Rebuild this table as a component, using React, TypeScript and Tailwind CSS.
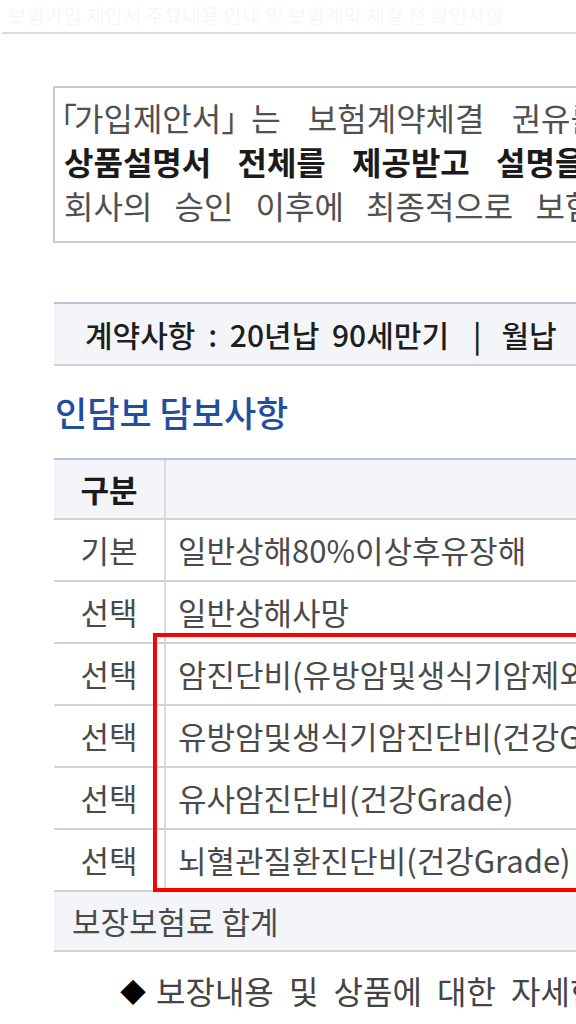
const font = { fontFamily: '"Noto Sans CJK KR", "Noto Sans", sans-serif' };

const rows = [
  { kind: "기본", name: "일반상해80%이상후유장해" },
  { kind: "선택", name: "일반상해사망" },
  { kind: "선택", name: "암진단비(유방암및생식기암제외)(건강Grade)" },
  { kind: "선택", name: "유방암및생식기암진단비(건강Grade)" },
  { kind: "선택", name: "유사암진단비(건강Grade)" },
  { kind: "선택", name: "뇌혈관질환진단비(건강Grade)" },
];

export default function App() {
  return (
    <div className="w-[576px] h-[1024px] overflow-hidden bg-white" style={font}>
      {/* faded top line */}
      <div className="h-[32px] w-[720px] pl-[8px] text-[20px] leading-[32px] text-[#f7f7f9] whitespace-nowrap">
        보험가입 제안서 주요내용 안내 및 보험계약 체결 전 확인사항
      </div>
      <div className="ml-[2px] h-[2px] w-[720px] bg-[#dcdce6]" />

      {/* notice box */}
      <div className="ml-[53px] mt-[52px] w-[820px] border-2 border-r-0 border-[#cacaca] pl-[9px] pt-[7px] pb-[14px] text-[32px] leading-[44px] whitespace-nowrap">
        <div className="text-[#505050] [word-spacing:20px]">
          <span className="inline-block -ml-[19px] -mr-[3px]">「</span>가입제안서<span className="inline-block -mr-[2px]">」</span>는 보험계약체결 권유를 위한 자료이며
        </div>
        <div className="font-bold text-[#1b1b1b] [word-spacing:19px]">상품설명서 전체를 제공받고 설명을 들으신 후</div>
        <div className="text-[#505050] [word-spacing:15px]">회사의 승인 이후에 최종적으로 보험계약이 성립됩니다.</div>
      </div>

      {/* contract bar */}
      <div className="ml-[54px] mt-[59px] w-[820px] h-[64px] border-t-2 border-b-2 border-t-[#b9c3d7] border-b-[#d2d2d2] bg-[#f4f5f9] pl-[31px] flex items-center text-[30px] font-medium text-[#1e1e1e] whitespace-nowrap">
        <span className="[word-spacing:6px]">계약사항 : 20년납 90세만기</span>
        <span className="ml-[24px] mr-[20px]">|</span>
        <span>월납</span>
        <span className="ml-[24px] mr-[20px]">|</span>
        <span>전기납</span>
      </div>

      {/* heading */}
      <div className="ml-[55px] mt-[24px] h-[44px] flex items-center text-[35px] font-medium text-[#1f4f9f] whitespace-nowrap">
        인담보 담보사항
      </div>

      {/* table */}
      <div className="relative ml-[54px] mt-[24px] w-[820px] text-[31px] whitespace-nowrap">
        <div className="flex h-[60px] border-t-2 border-[#b9c3d7] bg-[#f4f5f9]">
          <div className="w-[112px] border-r-2 border-[#d8dbe3] flex items-center justify-center font-bold text-[#1b1b1b]">
            구분
          </div>
          <div className="flex-1" />
        </div>
        {rows.map((r, i) => (
          <div key={i} className="flex h-[62px] border-t-2 border-[#d0d2d8]">
            <div className="w-[112px] border-r-2 border-[#dadada] flex items-center justify-center text-[#4a4a4a]">
              {r.kind}
            </div>
            <div className="flex-1 pl-[12px] flex items-center text-[#4a4a4a]">{r.name}</div>
          </div>
        ))}
        <div className="h-[62px] border-t-2 border-b-2 border-[#d0d2d8] bg-[#f4f5f9] pl-[18px] flex items-center text-[#4a4a4a]">
          보장보험료 합계
        </div>

        {/* highlight */}
        <div className="absolute left-[99px] top-[175px] w-[700px] h-[259px] border-4 border-[#ff0000]" />
      </div>

      {/* footnote */}
      <div className="ml-[120px] mt-[14px] flex items-center gap-[10px] text-[32px] text-[#444444] whitespace-nowrap">
        <span className="text-[26px] text-black">◆</span>
        <span className="[word-spacing:8px]">보장내용 및 상품에 대한 자세한 사항은 상품설명서를 참고하시기 바랍니다.</span>
      </div>
    </div>
  );
}
